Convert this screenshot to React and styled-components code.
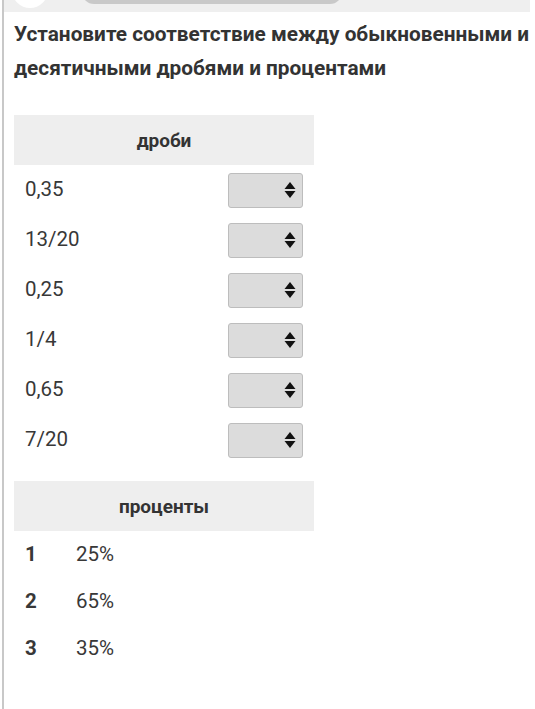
import React from "react";
import styled, { createGlobalStyle } from "styled-components";

const Global = createGlobalStyle`
  body {
    margin: 0;
    background: #fff;
    font-family: Roboto, "Noto Sans", sans-serif;
    color: #333;
  }
`;

const Page = styled.div`
  margin-left: 2px;
  border-left: 2px solid #c8c8c8;
  min-height: 709px;
  overflow: hidden;
`;

const TopStrip = styled.div`
  position: relative;
  height: 12px;
  background: #efefef;
  margin-right: 5px;
`;

const Avatar = styled.div`
  position: absolute;
  left: 8px;
  top: -28px;
  width: 36px;
  height: 36px;
  border-radius: 50%;
  background: #fff;
`;

const Pill = styled.div`
  position: absolute;
  left: 78px;
  top: -20px;
  width: 260px;
  height: 24px;
  border-radius: 12px;
  background: #c9c9c9;
`;

const Content = styled.div`
  padding: 0 0 40px 10px;
`;

const Title = styled.h1`
  margin: 5px 0 30px;
  font-size: 20.8px;
  line-height: 34px;
  font-weight: 700;
  color: #333;
  white-space: nowrap;
`;

const Table = styled.div`
  width: 300px;
  margin-bottom: ${(p) => p.$gap || 0}px;
`;

const Head = styled.div`
  height: 50px;
  background: #eee;
  display: flex;
  align-items: center;
  justify-content: center;
  font-weight: 700;
  font-size: 19px;
  color: #333;
`;

const Row = styled.div`
  height: ${(p) => p.$h}px;
  display: flex;
  align-items: center;
  padding: 0 11px 0 11px;
  font-size: 20.5px;
  color: #383838;
  line-height: 1;
`;

const Label = styled.span`
  flex: 1;
  padding-bottom: ${(p) => p.$lift ?? 2}px;
`;

const Num = styled.span`
  width: 51px;
  font-weight: 700;
`;

const Select = styled.div`
  width: 75px;
  height: 35px;
  box-sizing: border-box;
  border: 1px solid #bdbdbd;
  border-radius: 3px;
  background: #dcdcdc;
  display: flex;
  align-items: center;
  justify-content: flex-end;
  padding-right: 6px;
`;

const Arrows = () => (
  <svg width="12" height="18" viewBox="0 0 12 18">
    <path d="M6 1 L11.5 8 L0.5 8 Z" fill="#111" />
    <path d="M6 17 L11.5 10 L0.5 10 Z" fill="#111" />
  </svg>
);

const fractions = ["0,35", "13/20", "0,25", "1/4", "0,65", "7/20"];
const percents = ["25%", "65%", "35%"];

export default function App() {
  return (
    <>
      <Global />
      <Page>
        <TopStrip>
          <Avatar />
          <Pill />
        </TopStrip>
        <Content>
          <Title>
            Установите соответствие между обыкновенными и
            <br />
            десятичными дробями и процентами
          </Title>
          <Table $gap={16}>
            <Head>дроби</Head>
            {fractions.map((f) => (
              <Row key={f} $h={50}>
                <Label>{f}</Label>
                <Select>
                  <Arrows />
                </Select>
              </Row>
            ))}
          </Table>
          <Table>
            <Head>проценты</Head>
            {percents.map((p, i) => (
              <Row key={p} $h={47}>
                <Num>{i + 1}</Num>
                <Label $lift={0}>{p}</Label>
              </Row>
            ))}
          </Table>
        </Content>
      </Page>
    </>
  );
}
